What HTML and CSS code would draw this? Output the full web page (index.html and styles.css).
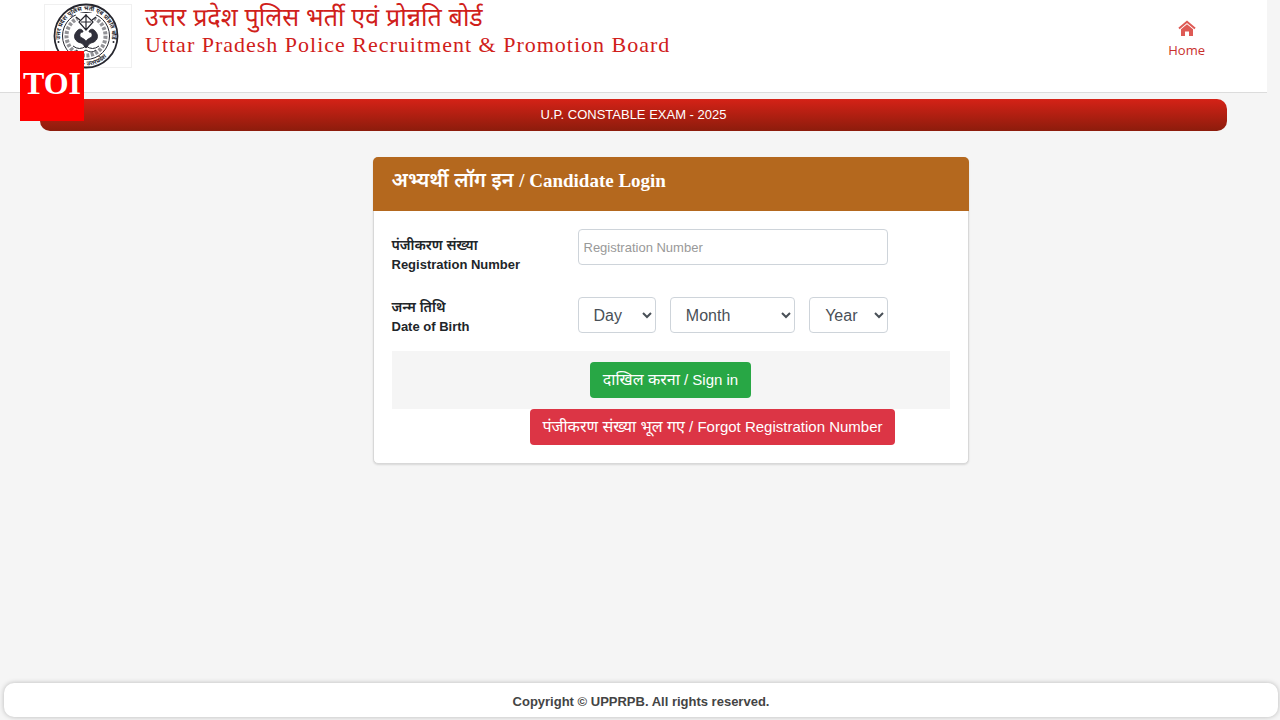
FILE: index.html
```html
<!DOCTYPE html>
<html lang="hi">
<head>
    <meta charset="UTF-8">
    <meta name="viewport" content="width=device-width, initial-scale=1.0">
    <title>UPPRPB - Candidate Login</title>
    <link rel="stylesheet" href="styles.css">
</head>
<body>
    <div class="toi">TOI</div>
    <header class="header">
        <div class="logo">
            <svg viewBox="0 0 66 66" width="66" height="66" fill="none" stroke="#26262e">
                <defs>
                    <path id="ring-top" d="M9.500 44.500A26 26 0 1 1 56.500 44.500"/>
                    <path id="ring-bottom" d="M13 54.500A29 29 0 0 0 53 54.500"/>
                </defs>
                <circle cx="33" cy="33" r="31.500" stroke-width="1.800"/>
                <circle cx="33" cy="33" r="23.500" stroke-width="1"/>
                <text class="ring-text"><textPath href="#ring-top" startOffset="50%" text-anchor="middle">उत्तर प्रदेश पुलिस भर्ती एवं प्रोन्नति बोर्ड</textPath></text>
                <text class="ring-text"><textPath href="#ring-bottom" startOffset="50%" text-anchor="middle">लखनऊ - उत्तरप्रदेश</textPath></text>
                <circle cx="33" cy="33" r="19.500" stroke-width="4" stroke-dasharray="3 1.500" opacity=".5"/>
                <path d="M22 10h22l-4 9-7 8-7-8z" fill="#fff" stroke="none"/>
                <path d="M33 11v16M33 12l-7 7 7 8 7-8zM23 14l4 3M43 14l-4 3M28 19h10" stroke-width="1.200"/>
                <path d="M24 28c-5 5-2 11 4 12 3 1 3 4 5 5 2-1 2-4 5-5 6-1 9-7 4-12-2-3-6-2-6 1 4 0 4 5 1 6-2 1-4 2-4 4 0-2-2-3-4-4-3-1-3-6 1-6 0-3-4-4-6-1z" fill="#30303c" stroke-width=".8"/>
                <path d="M20 43q6.500 5 13 0 6.500 5 13 0M23 47q5 4 10 0 5 4 10 0" stroke-width="1"/>
                <circle cx="5.500" cy="39" r="1" fill="#26262e" stroke="none"/>
                <circle cx="60.500" cy="39" r="1" fill="#26262e" stroke="none"/>
            </svg>
        </div>
        <div class="title">
            <div class="title-hi">उत्तर प्रदेश पुलिस भर्ती एवं प्रोन्नति बोर्ड</div>
            <div class="title-en">Uttar Pradesh Police Recruitment &amp; Promotion Board</div>
        </div>
        <a class="home" href="#">
            <svg viewBox="0 0 18 16" width="18" height="16">
                <path d="M1 8.500L9 1.700l8 6.800" fill="none" stroke="#de5a55" stroke-width="2"/>
                <path d="M9 4.300l6 5V16h-4v-4.500H7V16H3V9.300z" fill="#de5a55"/>
            </svg>
            Home
        </a>
    </header>

    <div class="banner">U.P. CONSTABLE EXAM - 2025</div>

    <main class="main">
        <form class="card">
            <h1 class="card-header">अभ्यर्थी लॉग इन <span>/ Candidate Login</span></h1>
            <div class="card-body">
                <div class="row">
                    <label for="regno"><span class="hi">पंजीकरण संख्या</span>Registration Number</label>
                    <input class="input" type="text" id="regno" placeholder="Registration Number">
                </div>
                <div class="row row-dob">
                    <label for="day"><span class="hi">जन्म तिथि</span>Date of Birth</label>
                    <div class="dob">
                        <select class="select" id="day"><option>Day</option></select>
                        <select class="select" id="month" aria-label="Month"><option>Month</option></select>
                        <select class="select" id="year" aria-label="Year"><option>Year</option></select>
                    </div>
                </div>
                <div class="signin">
                    <button class="btn btn-success" type="button"><span>दाखिल करना</span> / Sign in</button>
                </div>
                <div class="forgot">
                    <button class="btn btn-danger" type="button"><span>पंजीकरण संख्या भूल गए</span> / Forgot Registration Number</button>
                </div>
            </div>
        </form>
    </main>

    <footer class="footer">Copyright © UPPRPB. All rights reserved.</footer>
</body>
</html>
```
FILE: styles.css
```css
* {
    box-sizing: border-box;
}
body {
    margin: 0;
    min-height: 100vh;
    display: flex;
    flex-direction: column;
    background: #f5f5f5;
    color: #212529;
    font-family: "Liberation Sans", Arial, "Noto Sans Devanagari", "Noto Sans", sans-serif;
    font-size: 13px;
}
.toi {
    position: absolute;
    top: 51px;
    left: 20px;
    width: 64px;
    height: 70px;
    background: #f00;
    color: #fff;
    font: bold 32px/64px "Liberation Serif", "Times New Roman", serif;
    text-align: center;
}
.header {
    display: flex;
    align-items: flex-start;
    height: 93px;
    margin-right: 13px;
    padding: 4px 62px 0 44px;
    background: #fff;
    border-bottom: 1px solid #dcdcdc;
}
.logo {
    display: flex;
    justify-content: center;
    width: 88px;
    height: 64px;
    padding-right: 4px;
    border: 1px solid #f0f0f0;
}
.logo svg {
    flex: none;
    margin-top: -2px;
}
.ring-text {
    fill: #26262e;
    stroke: none;
    font-size: 6px;
    font-weight: bold;
}
.title {
    margin-left: 13px;
    color: #d0201a;
}
.title-hi {
    font-size: 25px;
    line-height: 26px;
}
.title-en {
    font-family: "Liberation Serif", "Times New Roman", serif;
    font-size: 22px;
    line-height: 30px;
    letter-spacing: 1px;
}
.home {
    display: flex;
    flex-direction: column;
    align-items: center;
    gap: 4px;
    margin-left: auto;
    padding-top: 16px;
    color: #c9302c;
    font-family: "Open Sans", sans-serif;
    font-size: 13px;
    line-height: 20px;
    text-decoration: none;
}
.banner {
    margin: 6px 53px 0 40px;
    background: linear-gradient(#d52217, #8c1c0c);
    border-radius: 10px;
    color: #fff;
    line-height: 32px;
    text-align: center;
}
.main {
    flex: 1;
    display: flex;
    justify-content: center;
    align-items: flex-start;
    padding: 26px 0 26px 61px;
}
.card {
    width: 100%;
    max-width: 596px;
    background: #fff;
    border: 1px solid #d8d8d8;
    border-radius: 5px;
    box-shadow: 0 1px 2px rgba(0, 0, 0, 0.12);
}
.card-header {
    height: 54px;
    margin: -1px -1px 0;
    padding: 8px 19px;
    background: #b4681e;
    border-radius: 5px 5px 0 0;
    color: #fff;
    font-size: 20px;
    font-weight: 600;
    line-height: 30px;
}
.card-header span {
    font-family: "Liberation Serif", "Times New Roman", serif;
    font-size: 19px;
}
.card-body {
    padding: 18px;
}
.row {
    display: grid;
    grid-template-columns: 3fr 5fr 1fr;
    align-items: start;
    height: 68px;
}
.row label {
    padding-top: 6px;
    font-weight: bold;
    line-height: 20px;
}
.row-dob {
    height: 54px;
}
.row-dob label {
    padding-top: 0;
}
.row .hi {
    display: block;
    font-size: 14px;
    font-weight: 600;
}
.input, .select {
    width: 100%;
    min-width: 0;
    height: 36px;
    background: #fff;
    border: 1px solid #ced4da;
    border-radius: 4px;
    font-family: inherit;
}
.input {
    padding: 0 5px;
    font-size: 13px;
}
.input::placeholder {
    color: #999;
}
.dob {
    display: grid;
    grid-template-columns: 5fr 8fr 5fr;
    gap: 14px;
}
.select {
    padding: 0 0 0 11px;
    color: #495057;
    font-size: 16px;
}
.signin {
    display: flex;
    justify-content: center;
    align-items: center;
    height: 58px;
    background: #f5f5f5;
}
.forgot {
    display: flex;
    justify-content: center;
    padding-left: 84px;
}
.btn {
    height: 36px;
    padding: 0 12px;
    border: 1px solid transparent;
    border-radius: 4px;
    color: #fff;
    font-family: inherit;
    font-size: 15px;
    line-height: 24px;
    white-space: nowrap;
}
.btn span {
    font-size: 16px;
}
.btn-success {
    background: #28a745;
}
.btn-danger {
    background: #dc3545;
}
.footer {
    margin: 0 2px 3px 4px;
    padding-top: 4px;
    background: #fff;
    border-radius: 10px;
    box-shadow: 0 0 5px rgba(0, 0, 0, 0.25);
    color: #444;
    font-weight: bold;
    line-height: 30px;
    text-align: center;
}
```
